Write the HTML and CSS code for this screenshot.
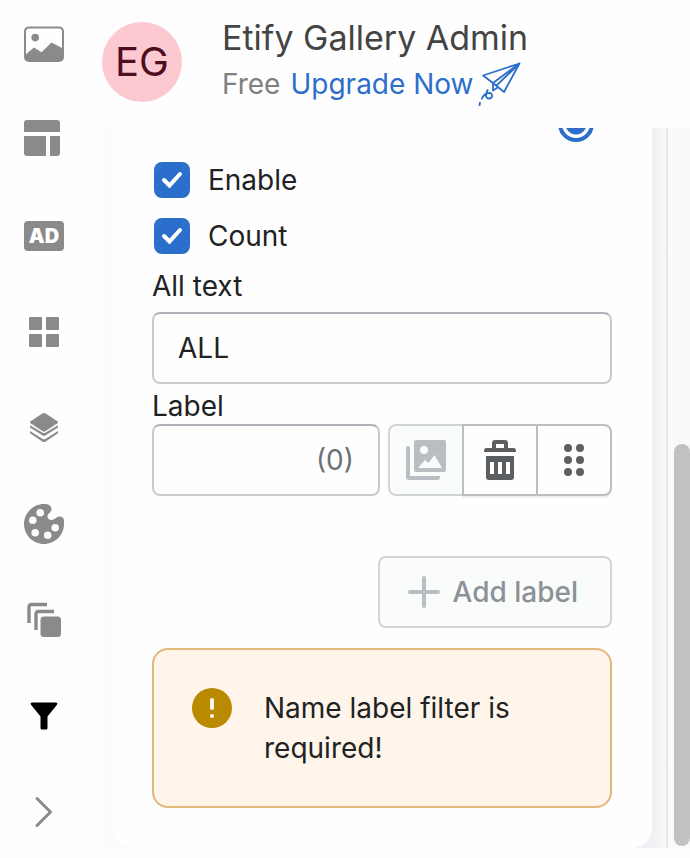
FILE: index.html
```html
<!DOCTYPE html>
<html lang="en">
<head>
<meta charset="utf-8">
<meta name="viewport" content="width=device-width, initial-scale=1">
<title>Etify Gallery Admin</title>
<link rel="stylesheet" href="styles.css">
</head>
<body>
<div class="app">
  <nav class="rail">
    <button class="rail-item" type="button" aria-label="Images">
      <svg viewBox="0 0 40 40"><rect x="1" y="3.400" width="38" height="33.600" rx="4" fill="none" stroke="currentColor" stroke-width="2"/><circle cx="11.200" cy="13.600" r="3.800"/><path d="M1 31 10 23.500 17.500 28.300 27.500 18.500 39 24.500V34q0 3-3 3H4q-3 0-3-3Z"/></svg>
    </button>
    <button class="rail-item" type="button" aria-label="Layout">
      <svg viewBox="0 0 40 40"><path d="M3 0h30q3 0 3 3v9H0V3q0-3 3-3ZM0 16h22v20H3q-3 0-3-3ZM26 16h10v17q0 3-3 3h-7Z"/></svg>
    </button>
    <button class="rail-item" type="button" aria-label="Ads"><span class="ad">AD</span></button>
    <button class="rail-item" type="button" aria-label="Grid">
      <svg viewBox="0 0 40 40"><rect x="5" y="5" width="13" height="13" rx="1"/><rect x="22" y="5" width="13" height="13" rx="1"/><rect x="5" y="22" width="13" height="13" rx="1"/><rect x="22" y="22" width="13" height="13" rx="1"/></svg>
    </button>
    <button class="rail-item" type="button" aria-label="Layers">
      <svg viewBox="0 0 40 40"><path d="M18.300 5.500q1.700-1 3.400 0l11.600 7.700q1.200 1 0 2L21.700 23q-1.700 1-3.400 0L6.700 15.200q-1.200-1 0-2Z"/><path d="M6 17.200v2.300l12.300 7.700q1.700 1 3.400 0L34 19.500v-2.300L21.700 24.600q-1.700 1-3.400 0ZM6 23v2.300l12.300 8.200q1.700 1 3.400 0L34 25.300V23l-12.300 7.800q-1.700 1-3.400 0Z"/></svg>
    </button>
    <button class="rail-item" type="button" aria-label="Colors">
      <svg viewBox="0 0 40 40"><path fill-rule="evenodd" d="M20 0C9 0 0 9 0 20s9 20 20 20 20-9 20-20v-3.500C40 14 38 12 35 12.500c-3 .500-4.500 3.500-7.500 3.500-2.500 0-4-1.500-4-3.500 0-3.500 4-4 4-7.500C27.500 2 25 0 20 0ZM16.200 5a3.800 3.800 0 1 1 0 7.600 3.800 3.800 0 0 1 0-7.600ZM8.800 12.500a3.800 3.800 0 1 1 0 7.600 3.800 3.800 0 0 1 0-7.600ZM11.200 25a3.800 3.800 0 1 1 0 7.600 3.800 3.800 0 0 1 0-7.600ZM23.700 27.500a3.800 3.800 0 1 1 0 7.600 3.800 3.800 0 0 1 0-7.600ZM31.200 20a3.800 3.800 0 1 1 0 7.600 3.800 3.800 0 0 1 0-7.600Z"/></svg>
    </button>
    <button class="rail-item" type="button" aria-label="Stack">
      <svg viewBox="0 0 40 40"><path d="M5 23V7q0-2.500 2.500-2.500H23M12 30V14q0-2.500 2.500-2.500H30" fill="none" stroke="currentColor" stroke-width="3.400"/><rect x="16.500" y="16.500" width="20.500" height="20.500" rx="3.500"/></svg>
    </button>
    <button class="rail-item active" type="button" aria-label="Filter">
      <svg viewBox="0 0 40 40"><path d="M8 6.500h24q2 .300 1 2.300L23.500 20.500V32q0 1.500-1.500 1.500h-4q-1.500 0-1.500-1.500V20.500L7 8.800q-1-2 1-2.300Z"/></svg>
    </button>
    <button class="rail-item" type="button" aria-label="Expand">
      <svg viewBox="0 0 40 40"><path d="M13 6.500 26.500 20 13 33.500" fill="none" stroke="currentColor" stroke-width="3" stroke-linecap="round" stroke-linejoin="round"/></svg>
    </button>
  </nav>
  <main class="main">
    <header class="header">
      <span class="avatar">EG</span>
      <div class="who">
        <h1 class="title">Etify Gallery Admin</h1>
        <p class="plan">Free
          <a class="upgrade" href="#upgrade">Upgrade Now
          <svg class="plane" viewBox="0 0 44 46"><path d="M5 14.500 41.500 2.500 26 31 15 22ZM15 22 41.500 2.500 18.500 24.500M15 22V29.500L20.500 26"/><path d="M10 28.500C6.500 34 8 37.500 11 37.500c4 0 4-5.500.500-5.500C8 32 5 34.500 3.500 38.500M2 41 1.500 45"/></svg></a>
        </p>
      </div>
    </header>
    <div class="scroller">
      <div class="viewport">
        <form class="card">
          <div class="mode"><input class="radio" type="radio" name="mode" aria-label="Filter by label" checked></div>
          <label class="check"><input type="checkbox" checked>Enable</label>
          <label class="check"><input type="checkbox" checked>Count</label>
          <label class="label label-spaced" for="all">All text</label>
          <input class="box" id="all" type="text" value="ALL">
          <label class="label" for="name">Label</label>
          <div class="row">
            <div class="box suffixed"><input class="bare" id="name" type="text"><span class="suffix">(0)</span></div>
            <div class="group">
              <button class="tool" type="button" aria-label="Choose image" disabled>
                <svg viewBox="0 0 40 40"><path fill-rule="evenodd" d="M10 0h28q2 0 2 2v28q0 2-2 2H10q-2 0-2-2V2q0-2 2-2ZM18 6a4 4 0 1 0 0 8 4 4 0 0 0 0-8ZM12 28h24L28.500 15 22.500 23 19 20Z"/><path d="M0 8q0-2 2-2 2 0 2 2v28h28q2 0 2 0 0 4-2 4H3q-3 0-3-3Z"/></svg>
              </button>
              <button class="tool" type="button" aria-label="Delete">
                <svg viewBox="0 0 40 40"><path fill-rule="evenodd" d="M12 8V3q0-3 3-3h10q3 0 3 3v5h6q2 0 2 4H4q0-4 2-4Zm4 0h8V4h-8ZM6 16h28v21q0 3-3 3H9q-3 0-3-3Zm4 6v12h4V22Zm8 0v12h4V22Zm8 0v12h4V22Z"/></svg>
              </button>
              <button class="tool" type="button" aria-label="Drag">
                <svg viewBox="0 0 40 40"><circle cx="14" cy="8" r="4"/><circle cx="26" cy="8" r="4"/><circle cx="14" cy="20" r="4"/><circle cx="26" cy="20" r="4"/><circle cx="14" cy="32" r="4"/><circle cx="26" cy="32" r="4"/></svg>
              </button>
            </div>
          </div>
          <button class="add" type="button" disabled>
            <svg viewBox="0 0 32 32"><path d="M16 2v28M2 16h28" fill="none" stroke="currentColor" stroke-width="4" stroke-linecap="round"/></svg>Add label
          </button>
          <div class="alert" role="alert">
            <svg viewBox="0 0 40 40"><circle cx="20" cy="20" r="20" fill="#b98900"/><path d="M20 12v8" stroke="#fff5ea" stroke-width="4" stroke-linecap="round"/><circle cx="20" cy="28" r="2" fill="#fff5ea"/></svg>
            <p class="message">Name label filter is required!</p>
          </div>
        </form>
      </div>
      <div class="track"><div class="thumb"></div></div>
    </div>
  </main>
</div>
</body>
</html>
```
FILE: styles.css
```css
* {
  box-sizing: border-box;
}

body {
  margin: 0;
  background: #fefefe;
  color: #202223;
  font-family: Inter, "Liberation Sans", sans-serif;
  font-size: 28px;
  line-height: 40px;
}

button,
input {
  margin: 0;
  font: inherit;
  color: inherit;
}

svg {
  display: block;
  flex: none;
  width: 40px;
  height: 40px;
  fill: currentColor;
}

.app {
  display: flex;
  height: 100vh;
  padding-bottom: 10px;
  overflow: hidden;
}

.rail {
  display: flex;
  flex: none;
  flex-direction: column;
  gap: 56px;
  padding: 24px 14px 0 24px;
}

.rail-item {
  display: flex;
  align-items: center;
  flex: none;
  width: 40px;
  height: 40px;
  padding: 0;
  border: 0;
  background: none;
  color: #8a8a8a;
}

.rail-item.active {
  color: #000;
}

.ad {
  width: 40px;
  border-radius: 4px;
  background: #8a8a8a;
  color: #fff;
  font-size: 20px;
  font-weight: 900;
  line-height: 30px;
  text-align: center;
}

.main {
  display: flex;
  flex: 1;
  flex-direction: column;
  min-width: 0;
}

.header {
  display: flex;
  flex: none;
  gap: 40px;
  height: 128px;
  padding: 16px 24px;
}

.avatar {
  flex: none;
  width: 80px;
  height: 80px;
  margin-top: 6px;
  border-radius: 50%;
  background: #fdc9d0;
  color: #4f0e1f;
  font-size: 40px;
  line-height: 80px;
  text-align: center;
}

.title {
  margin: 0;
  color: #444;
  font-size: 34px;
  font-weight: 400;
  line-height: 44px;
}

.plan {
  display: flex;
  align-items: center;
  gap: 10px;
  margin: 0;
  color: #808080;
  line-height: 48px;
}

.upgrade {
  display: flex;
  align-items: center;
  gap: 4px;
  color: #2c6ecb;
  text-decoration: none;
}

.plane {
  width: 44px;
  height: 46px;
  fill: none;
  stroke: currentColor;
  stroke-width: 1.8;
  stroke-linejoin: round;
}

.scroller {
  display: flex;
  flex: 1;
  min-height: 0;
}

.viewport {
  display: flex;
  flex: 1;
  flex-direction: column;
  justify-content: flex-end;
  min-width: 0;
  padding: 0 14px 0 34px;
  overflow: hidden;
  background: linear-gradient(90deg, #fefefe 20px, #fbfbfb 34px, #fbfbfb 60px, #eff1f4 calc(100% - 14px), #f6f7f8);
}

.card {
  display: flex;
  flex: none;
  flex-direction: column;
  padding: 40px;
  border-radius: 20px;
  background: #fefefe;
}

.mode {
  display: flex;
  justify-content: flex-end;
  padding: 0 18px 10px 0;
}

.radio,
.check input {
  appearance: none;
  flex: none;
  width: 36px;
  height: 36px;
}

.radio {
  border: 4px solid #2c6ecb;
  border-radius: 50%;
  background: radial-gradient(circle, #2c6ecb 10px, #fefefe 11px);
}

.check {
  display: flex;
  align-items: center;
  gap: 18px;
  height: 56px;
  padding-left: 2px;
}

.check input {
  border-radius: 8px;
  background: #2c6ecb url("data:image/svg+xml,%3Csvg xmlns='http://www.w3.org/2000/svg' viewBox='0 0 36 36'%3E%3Cpath d='M10 18 15.5 23.500 26 12' fill='none' stroke='white' stroke-width='4' stroke-linecap='round'/%3E%3C/svg%3E") center / 36px;
}

.label {
  padding-top: 4px;
  line-height: 36px;
}

.label-spaced {
  margin-bottom: 8px;
}

.box {
  width: 100%;
  height: 72px;
  padding: 0 24px;
  border: 2px solid #c9cccf;
  border-top-color: #aeb4b9;
  border-radius: 8px;
  background: #fefefe;
}

.row {
  display: flex;
  gap: 8px;
  margin-bottom: 60px;
}

.suffixed {
  display: flex;
  align-items: center;
  flex: 1;
  min-width: 0;
}

.bare {
  flex: 1;
  min-width: 0;
  padding: 0;
  border: 0;
  outline: 0;
  background: none;
}

.suffix {
  color: #6d7175;
}

.group {
  display: flex;
}

.tool {
  display: flex;
  align-items: center;
  justify-content: center;
  width: 76px;
  height: 72px;
  margin-left: -2px;
  padding: 0;
  border: 2px solid #babfc3;
  background: #fefefe;
  box-shadow: 0 2px 0 #f0f0f0;
  color: #5c5f62;
}

.tool:first-child {
  margin-left: 0;
  border-radius: 8px 0 0 8px;
}

.tool:last-child {
  border-radius: 0 8px 8px 0;
}

.tool:disabled,
.add {
  border-color: #d2d5d8;
  background: #fafbfb;
  box-shadow: none;
  color: #babec3;
}

.add {
  display: flex;
  align-items: center;
  align-self: flex-end;
  gap: 13px;
  height: 72px;
  margin-bottom: 20px;
  padding: 0 32px 0 28px;
  border: 2px solid #d2d5d8;
  border-radius: 8px;
  color: #8c9196;
  font-weight: 500;
}

.add svg {
  width: 32px;
  height: 32px;
  color: #babec3;
}

.alert {
  display: flex;
  gap: 32px;
  padding: 38px;
  border: 2px solid #e1b878;
  border-radius: 16px;
  background: #fff5ea;
}

.message {
  margin: 0;
}

.track {
  display: flex;
  align-items: flex-end;
  flex: none;
  padding: 0 0 2px 6px;
  border-left: 2px solid #e6e6e6;
  background: #fafafa;
}

.thumb {
  width: 16px;
  height: 56%;
  border-radius: 8px;
  background: #c1c1c1;
}
```
